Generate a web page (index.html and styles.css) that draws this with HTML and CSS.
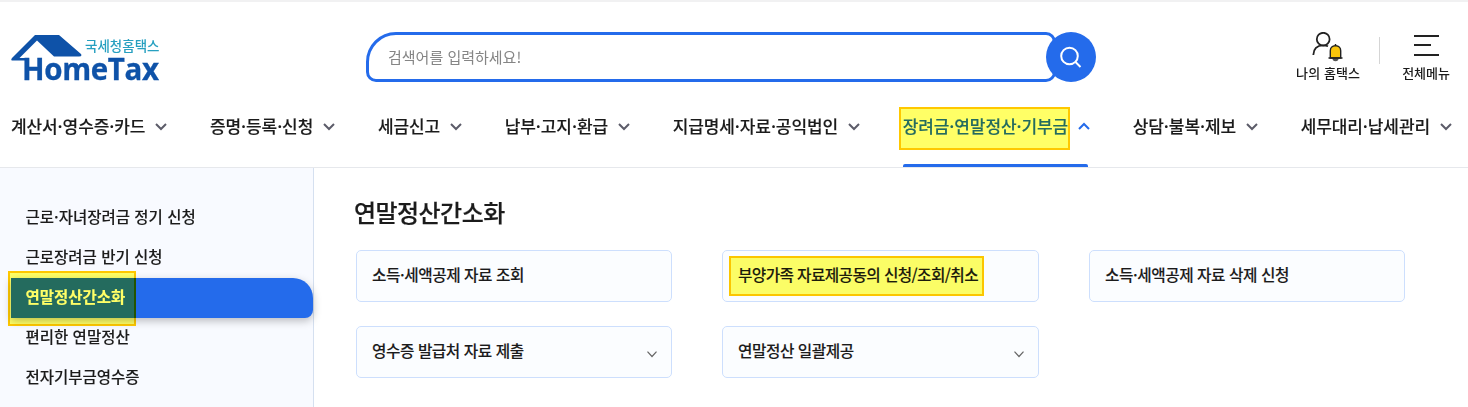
FILE: index.html
```html
<!DOCTYPE html>
<html lang="ko">
<head>
<meta charset="utf-8">
<title>국세청홈택스</title>
<link rel="stylesheet" href="styles.css">
</head>
<body>
<header class="header">
  <div class="top">
    <a class="logo">
      <svg class="roof" width="74" height="28" viewBox="0 0 74 28"><path fill="#0e52a8" d="M24 0H48L70 19Q71.500 21.500 68 21.500H43L26 5.500L8.500 23H18V28H14V25.500H1Q-.5 25 1 23Z"/></svg>
      <span class="logo-ko">국세청홈택스</span>
      <span class="logo-en">HomeTax</span>
    </a>
    <div class="search">
      <div class="search-box">검색어를 입력하세요!</div>
      <button class="search-btn"><svg width="24" height="24" viewBox="0 0 24 24" fill="none" stroke="#fff" stroke-width="2"><circle cx="10.5" cy="11" r="8.300"/><path d="M16.500 17L21.500 22"/></svg></button>
    </div>
    <div class="utils">
      <a class="util my">
        <svg width="32" height="30" viewBox="0 0 32 30" fill="none" stroke="#222" stroke-width="1.8"><circle cx="11.2" cy="7.2" r="6.4"/><path d="M1.3 23C1.6 16 6 13.3 11 13.3Q14 13.3 16 14.3"/><path fill="#555" stroke="none" d="M20.5 26.500a3 2.800 0 0 0 6 0z"/><path fill="#f9c50b" stroke-width="1.4" d="M18.3 26V18.7Q18.3 14 23.5 13.6Q28.7 14 28.7 18.7V26Z"/><path stroke-width="1.4" d="M16.5 26H30.5M23.5 12V14"/></svg>
        <span>나의 홈택스</span>
      </a>
      <i class="divider"></i>
      <a class="util all">
        <svg width="26" height="30" viewBox="0 0 26 30" stroke="#222" stroke-width="2"><path d="M1 4H26M1 13H18M1 23H26"/></svg>
        <span>전체메뉴</span>
      </a>
    </div>
  </div>
  <nav class="nav">
    <a class="nav-item">계산서·영수증·카드<svg class="chev" viewBox="0 0 12 8"><path d="M1 1L6 6L11 1"/></svg></a>
    <a class="nav-item">증명·등록·신청<svg class="chev" viewBox="0 0 12 8"><path d="M1 1L6 6L11 1"/></svg></a>
    <a class="nav-item">세금신고<svg class="chev" viewBox="0 0 12 8"><path d="M1 1L6 6L11 1"/></svg></a>
    <a class="nav-item">납부·고지·환급<svg class="chev" viewBox="0 0 12 8"><path d="M1 1L6 6L11 1"/></svg></a>
    <a class="nav-item">지급명세·자료·공익법인<svg class="chev" viewBox="0 0 12 8"><path d="M1 1L6 6L11 1"/></svg></a>
    <a class="nav-item active">장려금·연말정산·기부금<svg class="chev" viewBox="0 0 12 8"><path d="M1 7L6 2L11 7"/></svg><i class="mark mark-nav"></i></a>
    <a class="nav-item">상담·불복·제보<svg class="chev" viewBox="0 0 12 8"><path d="M1 1L6 6L11 1"/></svg></a>
    <a class="nav-item">세무대리·납세관리<svg class="chev" viewBox="0 0 12 8"><path d="M1 1L6 6L11 1"/></svg></a>
  </nav>
</header>
<div class="body">
  <aside class="side">
    <a class="side-item">근로·자녀장려금 정기 신청</a>
    <a class="side-item">근로장려금 반기 신청</a>
    <a class="side-item current">연말정산간소화<i class="mark mark-side"></i></a>
    <a class="side-item">편리한 연말정산</a>
    <a class="side-item">전자기부금영수증</a>
  </aside>
  <main class="main">
    <h2 class="title">연말정산간소화</h2>
    <div class="grid">
      <a class="card">소득·세액공제 자료 조회</a>
      <a class="card tight">부양가족 자료제공동의 신청/조회/취소<i class="mark mark-card"></i></a>
      <a class="card">소득·세액공제 자료 삭제 신청</a>
      <a class="card">영수증 발급처 자료 제출<svg class="card-chev" viewBox="0 0 10 7"><path d="M.5 .7L5 5.5L9.500 .7"/></svg></a>
      <a class="card">연말정산 일괄제공<svg class="card-chev" viewBox="0 0 10 7"><path d="M.5 .7L5 5.500L9.500 .7"/></svg></a>
    </div>
  </main>
</div>
</body>
</html>
```

FILE: styles.css
```css
* { box-sizing: border-box; }
body { margin: 0; height: 407px; overflow: hidden; background: #fff; color: #1b1b1b; font-family: "Noto Sans CJK KR", sans-serif; font-weight: 500; }
.header { height: 168px; border-top: 2px solid #f1f1f2; border-bottom: 1px solid #e6e8ec; }
.top { height: 90px; display: flex; align-items: flex-start; padding: 30px 17px 0 11px; }
.logo { width: 355px; display: grid; grid-template-columns: 74px 1fr; grid-template-rows: 22px 28px; padding-top: 3px; }
.roof { grid-area: 1 / 1; }
.logo-ko { grid-area: 1 / 2; font-size: 13.5px; line-height: 20px; color: #27a0c0; white-space: nowrap; }
.logo-en { grid-area: 2 / 1 / 3 / 3; padding-left: 11px; font: 700 29.500px/24px "Open Sans", sans-serif; color: #0e52a8; letter-spacing: -.35px; -webkit-text-stroke: .3px currentColor; }
.search { display: flex; width: 730px; height: 50px; }
.search-box { width: 690px; height: 50px; border: 3px solid #246beb; border-radius: 30px 10px 10px 10px; padding-left: 19px; font-size: 15px; line-height: 44px; font-weight: 400; color: #858585; letter-spacing: 0; }
.search-btn { width: 50px; height: 50px; margin-left: -10px; flex: none; padding: 0; border: 0; border-radius: 50%; background: #246beb; display: flex; align-items: center; justify-content: center; }
.utils { display: flex; margin-left: auto; margin-right: 1px; }
.util { display: flex; flex-direction: column; align-items: center; font-size: 13px; line-height: 20px; white-space: nowrap; }
.my { margin-right: 1px; letter-spacing: .1px; }
.util span { margin-top: 1px; }
.divider { width: 1px; height: 27px; margin: 5px 22px 0 18px; background: #d5d5d5; }
.nav { display: flex; justify-content: space-between; height: 75px; padding: 0 16px 0 11px; }
.nav-item { position: relative; display: flex; align-items: center; height: 70px; padding-bottom: 4px; font-size: 17px; letter-spacing: -.1px; -webkit-text-stroke: .12px currentColor; white-space: nowrap; }
.chev { width: 12px; height: 8px; margin: 4px 0 0 10px; fill: none; stroke: #5c5c69; stroke-width: 2; }
.active { color: #246beb; height: 75px; padding-bottom: 9px; }
.active::after { content: ""; position: absolute; left: 0; right: 2px; bottom: 0; height: 3px; border-radius: 2px 2px 0 0; background: #246beb; }
.active .chev { stroke: #246beb; margin-top: 2px; }
.mark { position: absolute; background: #ffff66; border: 2px solid #ffc800; mix-blend-mode: multiply; }
.mark-nav { left: -4px; top: 15px; width: 171px; height: 43px; }
.body { display: flex; height: 239px; }
.side { width: 314px; background: #f8faff; border-right: 1px solid #d5e0f0; padding: 30px 0 0 11px; }
.side-item { position: relative; display: block; height: 40px; padding-left: 14.500px; line-height: 36px; font-size: 15.5px; -webkit-text-stroke: .1px currentColor; white-space: nowrap; }
.current { background: #246beb; color: #fff; font-weight: 700; border-radius: 0 20px 8px 0; box-shadow: 0 3px 8px rgba(0,0,0,.25); z-index: 1; }
.mark-side { left: -3px; top: -7px; width: 128px; height: 55px; }
.main { flex: 1; padding: 26px 0 0 42px; }
.title { margin: 0 0 20px -2px; font-size: 24px; line-height: 36px; font-weight: 500; letter-spacing: -.55px; -webkit-text-stroke: .2px currentColor; }
.grid { display: grid; grid-template-columns: 316px 317px 316px; grid-auto-rows: 52px; gap: 24px 50px; }
.card { position: relative; display: flex; align-items: center; justify-content: space-between; padding: 0 14px 4px 15px; border: 1px solid #cddffd; border-radius: 5px; background: #fbfdff; font-size: 15.700px; letter-spacing: -.45px; -webkit-text-stroke: .1px currentColor; white-space: nowrap; }
.tight { letter-spacing: -.6px; }
.card-chev { width: 10px; height: 7px; margin-top: 8px; fill: none; stroke: #666; stroke-width: 1.2; }
.mark-card { left: 6px; top: 5px; width: 255px; height: 40px; }
```
